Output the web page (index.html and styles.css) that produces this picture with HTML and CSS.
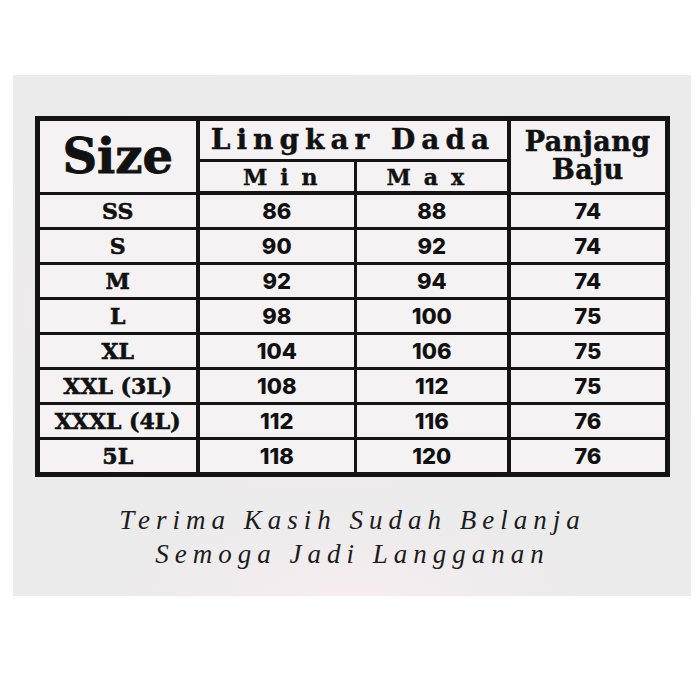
FILE: index.html
```html
<!DOCTYPE html>
<html>
<head>
<meta charset="utf-8">
<link rel="stylesheet" href="styles.css">
</head>
<body>
<div class="panel">
  <table class="chart">
    <colgroup>
      <col class="c-size"><col class="c-min"><col class="c-max"><col class="c-pj">
    </colgroup>
    <thead>
      <tr class="h1">
        <th rowspan="2" class="size-head">Size</th>
        <th colspan="2" class="ld">Lingkar Dada</th>
        <th rowspan="2" class="pj">Panjang<br>Baju</th>
      </tr>
      <tr class="h2">
        <th class="mm">Min</th>
        <th class="mm">Max</th>
      </tr>
    </thead>
    <tbody>
      <tr><td class="sz">SS</td><td class="num">86</td><td class="num">88</td><td class="num">74</td></tr>
      <tr><td class="sz">S</td><td class="num">90</td><td class="num">92</td><td class="num">74</td></tr>
      <tr><td class="sz">M</td><td class="num">92</td><td class="num">94</td><td class="num">74</td></tr>
      <tr><td class="sz">L</td><td class="num">98</td><td class="num">100</td><td class="num">75</td></tr>
      <tr><td class="sz">XL</td><td class="num">104</td><td class="num">106</td><td class="num">75</td></tr>
      <tr><td class="sz">XXL (3L)</td><td class="num">108</td><td class="num">112</td><td class="num">75</td></tr>
      <tr><td class="sz">XXXL (4L)</td><td class="num">112</td><td class="num">116</td><td class="num">76</td></tr>
      <tr><td class="sz">5L</td><td class="num">118</td><td class="num">120</td><td class="num">76</td></tr>
    </tbody>
  </table>
  <div class="thanks">
    <p class="line1">Terima Kasih Sudah Belanja</p>
    <p class="line2">Semoga Jadi Langganan</p>
  </div>
</div>
</body>
</html>
```

FILE: styles.css
```css
html, body {
  margin: 0;
  padding: 0;
  background: #ffffff;
}

body {
  padding-top: 75px;
  padding-left: 13px;
}

.panel {
  width: 678px;
  height: 521px;
  box-sizing: border-box;
  padding: 41px 0 0 22px;
  background:
    radial-gradient(ellipse 260px 90px at 50% 100%, #f6edf0 0%, rgba(246,237,240,0) 100%),
    radial-gradient(ellipse 420px 260px at 45% 45%, #f3eef0 0%, rgba(243,238,240,0) 100%),
    #ebebeb;
}

.chart {
  border-collapse: collapse;
  table-layout: fixed;
  width: 635px;
  border: 5px solid #141414;
  background: #f4f2f3;
  color: #111;
}

.c-size { width: 160px; }
.c-min { width: 158px; }
.c-max { width: 153px; }
.c-pj { width: 159px; }

.chart th, .chart td {
  padding: 0;
  text-align: center;
  vertical-align: middle;
  border-top: 3px solid #141414;
  border-bottom: 3px solid #141414;
}

.size-head, .sz {
  border-right: 4px solid #141414;
}

.pj, .chart td:last-child {
  border-left: 4px solid #141414;
}

.chart td.num:nth-child(2), .h2 .mm:first-child {
  border-right: 3px solid #141414;
}

.h1 th { height: 38px; }
.h2 th { height: 29px; }

.size-head, .h2 th {
  border-bottom: 4px solid #141414;
}

.ld {
  border-bottom: 4px solid #141414;
}

.size-head {
  font-family: "DejaVu Serif", serif;
  font-weight: bold;
  font-size: 48px;
  line-height: 1;
  padding-top: 2px;
  -webkit-text-stroke: 0.8px #111;
}

.ld {
  font-family: "DejaVu Serif", serif;
  font-weight: bold;
  font-size: 28px;
  letter-spacing: 6px;
  padding-left: 6px;
  line-height: 1;
  -webkit-text-stroke: 0.4px #111;
}

.mm {
  font-family: "DejaVu Serif", serif;
  font-weight: bold;
  font-size: 22px;
  letter-spacing: 13px;
  padding-left: 13px;
  line-height: 1;
  -webkit-text-stroke: 0.4px #111;
}

.h2 .mm:first-child {
  padding-left: 20px;
}

.pj {
  font-family: "DejaVu Serif", serif;
  font-weight: bold;
  font-size: 27px;
  line-height: 28px;
  letter-spacing: 0.5px;
  padding-top: 2px;
  -webkit-text-stroke: 0.5px #111;
}

.chart td { height: 32px; }

.sz {
  font-family: "DejaVu Serif", serif;
  font-weight: bold;
  font-size: 22px;
  line-height: 1;
  -webkit-text-stroke: 0.6px #111;
}

.num {
  font-family: Inter, "DejaVu Sans", sans-serif;
  font-weight: 800;
  font-size: 22px;
  line-height: 1;
}

.thanks {
  width: 635px;
  padding-top: 26px;
  text-align: center;
  font-family: "Liberation Serif", serif;
  font-style: italic;
  color: #1c1c1c;
}

.thanks p {
  margin: 0;
  font-size: 27px;
  line-height: 34px;
}

.line1 { letter-spacing: 6px; }
.line2 { letter-spacing: 6px; }
```
